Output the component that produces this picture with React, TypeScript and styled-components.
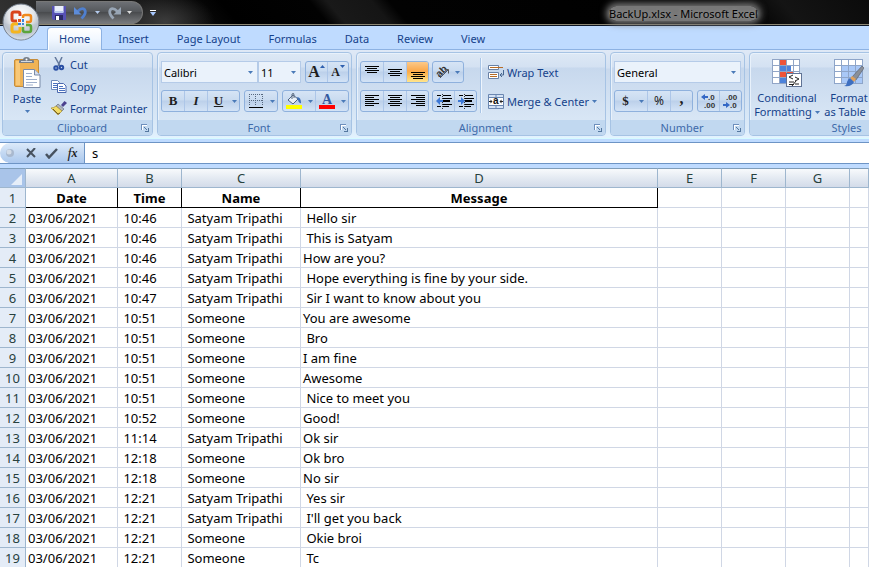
import React from "react";
import styled, { createGlobalStyle, css } from "styled-components";

const GlobalStyle = createGlobalStyle`
  * { box-sizing: border-box; }
  html, body { margin: 0; padding: 0; overflow: hidden; }
  body, button, input, select {
    font-family: "Noto Sans", "Open Sans", sans-serif;
    font-size: 11px;
    color: #15428b;
  }
  button { border: 0; padding: 0; background: none; cursor: pointer; }
  svg { display: block; flex: none; }
`;

const Window = styled.div`
  display: flex;
  flex-direction: column;
  height: 100vh;
  overflow: hidden;
  background: #bfdbff;
`;

/* ---------- title bar ---------- */

const Header = styled.header`
  position: relative;
`;

const TitleBar = styled.div`
  display: flex;
  height: 26px;
  padding-left: 36px;
  border-bottom: 1px solid #0c1524;
  box-shadow: inset 0 -1px 0 #8c8774;
  background:
    radial-gradient(ellipse 50px 30px at 165px 22px, #3c3c3c, transparent),
    linear-gradient(50deg, #333 0, #1b1b1b 16%, #000 27%, #020202 37%, #191919 39%, #151515 44%, #020202 46%, #000 84%, #141414 90%, #0b0b0b 100%);
`;

const QuickAccess = styled.div`
  display: flex;
  align-items: center;
  width: 107px;
  height: 23px;
  margin-top: 1px;
  padding-left: 15px;
  border: 1px solid #777;
  border-left: 0;
  border-radius: 0 12px 12px 0;
  background: linear-gradient(#6d7075, #55585c 45%, #4a4c4f 50%, #77797c);
`;

const QuickButton = styled.button<{ $width: number }>`
  display: flex;
  align-items: center;
  align-self: center;
  justify-content: center;
  width: ${(p) => p.$width}px;
  height: 20px;
`;

const WindowTitle = styled.h1`
  flex: 1;
  margin: 0;
  padding-left: 447px;
  font-size: 11px;
  font-weight: 400;
  line-height: 27px;
  white-space: nowrap;
  color: #000;
  span {
    border-radius: 8px;
    background: #777;
    box-shadow: 0 0 7px 3px #777;
    text-shadow: 0 0 4px #999;
  }
`;

const Orb = styled.button`
  position: absolute;
  left: 2px;
  top: 3px;
`;

/* ---------- ribbon ---------- */

const TabStrip = styled.nav`
  display: flex;
  gap: 4px;
  height: 24px;
  padding: 1px 0 0 47px;
  border-bottom: 1px solid #8db2e3;
  background: #bfdbff;
`;

const Tab = styled.button<{ $active?: boolean }>`
  height: 23px;
  padding: 0 11px;
  line-height: 22px;
  white-space: nowrap;
  border: 1px solid transparent;
  border-bottom: 0;
  border-radius: 4px 4px 0 0;
  ${(p) =>
    p.$active &&
    css`
      border-color: #8db2e3;
      background: linear-gradient(#fff, #f2f8ff 50%, #dce8f6);
      box-shadow: inset 1px 1px 0 #fff;
    `}
`;

const Ribbon = styled.div`
  display: flex;
  gap: 4px;
  padding: 2px 0 2px 2px;
  border-bottom: 1px solid #d6fbff;
  background: linear-gradient(#dfe9f6, #d4e1f2 20%, #c9d9ed 22%, #dcebf9 90%, #e3f3ff);
`;

const GroupBox = styled.section<{ $width?: number }>`
  display: flex;
  flex-direction: column;
  flex: ${(p) => (p.$width ? "none" : "1 0 178px")};
  width: ${(p) => (p.$width ? p.$width + "px" : "auto")};
  border: 1px solid #a6c3e4;
  border-radius: 4px;
  box-shadow: inset 1px 1px 0 #e8f1fb;
  background: linear-gradient(#dde8f5 0, #d4e1f2 14px, #c7d8ed 15px, #d8e6f5 66px);
  overflow: hidden;
`;

const GroupBody = styled.div`
  display: flex;
  height: 67px;
  padding: 8px 3px 0;
`;

const GroupLabel = styled.h2`
  display: flex;
  align-items: center;
  height: 15px;
  margin: 0;
  padding: 0 3px 0 20px;
  font-size: 11px;
  font-weight: 400;
  line-height: 15px;
  color: #3e6aaa;
  background: #c1d8f0;
  > span { flex: 1; text-align: center; }
`;

const Stack = styled.div`
  display: flex;
  flex-direction: column;
  gap: 7px;
`;

const Line = styled.div<{ $gap?: number }>`
  display: flex;
  height: 22px;
  gap: ${(p) => p.$gap ?? 4}px;
`;

const ButtonSet = styled.div`
  display: flex;
  height: 22px;
  border: 1px solid #8fb1dd;
  border-radius: 3px;
  overflow: hidden;
  background: linear-gradient(#d6e4f5, #c9dbf0 45%, #bcd0ea 50%, #d3e3f6);
`;

const Tool = styled.button<{ $width: number; $joined?: boolean; $on?: boolean }>`
  display: flex;
  align-items: center;
  justify-content: center;
  width: ${(p) => p.$width}px;
  height: 20px;
  border-left: ${(p) => (p.$joined ? "0" : "1px solid #adc6e8")};
  background: ${(p) => (p.$on ? "linear-gradient(#fbc98a, #fba84a 45%, #fcb954 60%, #ffe58c)" : "none")};
  &:first-child { border-left: 0; }
`;

const Letter = styled.span<{ $italic?: boolean; $underline?: boolean; $size?: number; $light?: boolean; $raised?: boolean }>`
  font-family: "Liberation Serif", serif;
  font-size: ${(p) => p.$size ?? 13}px;
  font-weight: ${(p) => (p.$light ? 400 : 700)};
  line-height: 16px;
  color: #1e1e1e;
  padding-bottom: ${(p) => (p.$raised ? "4px" : "0")};
  font-style: ${(p) => (p.$italic ? "italic" : "normal")};
  text-decoration: ${(p) => (p.$underline ? "underline" : "none")};
`;

const Percent = styled.span`
  font-size: 12px;
  line-height: 16px;
  color: #1e1e1e;
`;

const Combo = styled.label<{ $width: number }>`
  position: relative;
  display: flex;
  align-items: center;
  width: ${(p) => p.$width}px;
  height: 22px;
  border: 1px solid #b5cbe8;
  background: #eaf2fb;
  select {
    width: 100%;
    height: 20px;
    padding: 0 2px;
    border: 0;
    background: none;
    appearance: none;
    color: #000;
  }
  svg { position: absolute; right: 4px; pointer-events: none; }
`;

const TextButton = styled.button`
  display: flex;
  align-items: center;
  gap: 3px;
  height: 22px;
  white-space: nowrap;
`;

const ClipboardList = styled.div`
  margin: -8px 0 0 3px;
`;

const BigButton = styled.button<{ $width: number }>`
  display: flex;
  flex-direction: column;
  align-items: center;
  width: ${(p) => p.$width}px;
  height: 60px;
  margin-top: -2px;
  line-height: 14px;
  white-space: nowrap;
  > svg:first-child { margin-bottom: 4px; }
`;

const PasteButton = styled(BigButton)`
  margin-top: -4px;
  > svg:last-child { margin-top: 4px; }
`;

const CaretLine = styled.span`
  display: flex;
  align-items: center;
  gap: 3px;
`;

const Divider = styled.div`
  width: 2px;
  height: 55px;
  margin: -3px 6px 0 3px;
  border-left: 1px solid #a9c5e6;
  border-right: 1px solid #eef5fd;
`;

/* ---------- formula bar ---------- */

const FormulaBar = styled.div`
  display: flex;
  height: 22px;
  margin-top: 3px;
  border-top: 1px solid #6d94c5;
  border-bottom: 1px solid #6d94c5;
  background: #fff;
  flex: none;
`;

const FormulaTools = styled.div`
  display: flex;
  align-items: center;
  width: 85px;
  border-right: 1px solid #6d94c5;
  border-radius: 10px 0 0 10px;
  background: linear-gradient(#dceafa, #c3d8f2 50%, #abc8ee);
`;

const FormulaInput = styled.input`
  flex: 1;
  padding: 0 7px;
  border: 0;
  outline: 0;
  font-size: 13px;
  color: #000;
`;

/* ---------- worksheet ---------- */

const Sheet = styled.main`
  flex: 1;
  min-height: 0;
  margin-top: 4px;
  overflow: hidden;
  background: #fff;
`;

const Grid = styled.table`
  width: 100%;
  min-width: 868px;
  table-layout: fixed;
  border-collapse: separate;
  border-spacing: 0;
  font-size: 13px;
  color: #000;
`;

const HeadCell = styled.th`
  height: 20px;
  padding: 0;
  border-top: 1px solid #7f9db9;
  border-right: 1px solid #9eb6ce;
  border-bottom: 1px solid #9eb6ce;
  font-weight: 400;
  line-height: 18px;
  color: #27413e;
  background: linear-gradient(#f8fafc, #e4eaf2 50%, #d3dbe9);
`;

const CornerCell = styled(HeadCell)`
  background: #a9c4e9;
  svg { margin: 2px 3px 0 auto; }
`;

const RowHead = styled.th`
  height: 20px;
  padding: 2px 0 0;
  border-right: 1px solid #9eb6ce;
  border-bottom: 1px solid #9eb6ce;
  font-weight: 400;
  line-height: 17px;
  color: #27413e;
  background: #e4ecf7;
`;

const Cell = styled.td<{ $title?: boolean }>`
  height: 20px;
  padding: 2px 2px 0;
  border-right: 1px solid #d0d7e5;
  border-bottom: 1px solid #d0d7e5;
  line-height: 17px;
  white-space: pre;
  overflow: hidden;
  ${(p) =>
    p.$title &&
    css`
      border-color: #000;
      font-weight: 700;
      text-align: center;
    `}
`;

/* ---------- icons ---------- */

const Caret = ({ color = "#4a7ab8" }: { color?: string }) => (
  <svg width="5" height="3" viewBox="0 0 5 3"><path d="M0 0h5L2.5 3z" fill={color} /></svg>
);

const Launcher = () => (
  <svg width="8" height="8" viewBox="0 0 8 8" shapeRendering="crispEdges">
    <path d="M.5 6V.5H6" fill="none" stroke="#6d8fbd" />
    <path d="M3 3l3 3M7.500 3.500v4h-4" fill="none" stroke="#54779f" />
    <path d="M1 1h5v1H2v4H1z" fill="#fff" />
  </svg>
);

const OrbIcon = () => (
  <svg width="38" height="38" viewBox="0 0 38 38">
    <defs>
      <radialGradient id="orb" cx=".5" cy=".3" r=".7">
        <stop offset="0" stopColor="#fff" /><stop offset=".5" stopColor="#e3e6ea" /><stop offset=".75" stopColor="#b9c0cb" /><stop offset="1" stopColor="#eef4fb" />
      </radialGradient>
    </defs>
    <circle cx="19" cy="19" r="18" fill="url(#orb)" stroke="#707a88" />
    <path d="M2 20a17 17 0 0 0 34 0q-17 5-34 0z" fill="#b9c3d0" opacity=".4" />
    <g fill="none" strokeWidth="3">
      <path d="M18 13V11q0-2-2-2h-4q-2 0-2 2v5q0 2 2 2h3" stroke="#d9431c" />
      <path d="M21 15v-1q0-2 2-2h4q2 0 2 2v3q0 2-2 2h-3" stroke="#f08a1d" strokeWidth="2.500" />
      <path d="M16 21h-4q-2 0-2 2v4q0 2 2 2h4q2 0 2-2v-3" stroke="#f5b51e" />
      <path d="M21 24v3q0 2 2 2h4q2 0 2-2v-3q0-2-2-2h-3" stroke="#5ba53a" strokeWidth="2.500" />
    </g>
    <path d="M16 16h3v3h-3z" fill="#e8571e" />
    <path d="M20 16h2v3h-2zM16 20h3v2h-3zM20 20h2v2h-2z" fill="#3d86d8" />
  </svg>
);

const SaveIcon = () => (
  <svg width="14" height="14" viewBox="0 0 14 14">
    <path d="M0 0h14v14H1.500L0 12.500z" fill="#5751b5" />
    <path d="M2.500 0h9v6h-9z" fill="#e9eefb" /><path d="M2.500 5h9v2h-9z" fill="#b9c7ee" />
    <path d="M3 9h8v5H3z" fill="#2b2a66" /><path d="M4 10h3v4H4z" fill="#fff" />
  </svg>
);

const UndoIcon = () => (
  <svg width="14" height="14" viewBox="0 0 14 14">
    <path d="M3.500 5.500Q8 1 10.500 3.500 13 7 7.500 12.500" fill="none" stroke="#4f7fce" strokeWidth="2.800" />
    <path d="M0 1v7.500h7.500z" fill="#5d8cd8" />
  </svg>
);

const RedoIcon = () => (
  <svg width="14" height="14" viewBox="0 0 14 14">
    <path d="M10.500 5.500Q6 1 3.500 3.500 1 7 6.500 12.500" fill="none" stroke="#98a5b5" strokeWidth="2.800" />
    <path d="M14 1v7.500H6.500z" fill="#98a5b5" />
  </svg>
);

const PasteIcon = () => (
  <svg width="27" height="31" viewBox="0 0 27 31">
    <rect x=".5" y="2.500" width="24" height="27" rx="1.500" fill="#f0b355" stroke="#c58d3b" />
    <path d="M2 28V4h4v24z" fill="#f8c878" />
    <path d="M5 6V4q0-1 1-1h3q0-3 3.500-3T16 3h3q1 0 1 1v2z" fill="#787f88" />
    <path d="M7 4h11v1H7z" fill="#d5dae0" /><circle cx="12.500" cy="2.500" r="1" fill="#fff" />
    <path d="M9.500 12.500h11l5.500 5.500v12.500H9.500z" fill="#fff" stroke="#7b8ba8" />
    <path d="M20.500 12.500V18H26" fill="#d7e0ee" stroke="#7b8ba8" />
    <path d="M12 16.500h6M12 19.500h6M12 22.500h11M12 25.500h11M12 28h7" stroke="#9eafcc" />
  </svg>
);

const CutIcon = () => (
  <svg width="16" height="14" viewBox="0 0 16 14" fill="none">
    <path d="M4 0l5 9M11 0L7 9" stroke="#63789c" strokeWidth="1.500" />
    <circle cx="5" cy="11" r="1.700" stroke="#2b50a4" strokeWidth="2" /><circle cx="10.500" cy="10.500" r="1.700" stroke="#2b50a4" strokeWidth="2" />
  </svg>
);

const CopyIcon = () => (
  <svg width="16" height="13" viewBox="0 0 16 13">
    <path d="M.5.5h6l2 2v7h-8z" fill="#fff" stroke="#6e8abb" /><path d="M2 3.500h4M2 5.500h4M2 7.500h4" stroke="#4b72c0" />
    <path d="M6.500 3.500h6l2.500 2.500v6.500H6.500z" fill="#fff" stroke="#4a68ae" /><path d="M8 6.500h4M8 8.500h6M8 10.500h6" stroke="#4b72c0" />
  </svg>
);

const PainterIcon = () => (
  <svg width="16" height="14" viewBox="0 0 16 14">
    <path d="M10 4l3.500-4L16 2l-4 4z" fill="#4c418e" />
    <path d="M7 3l6 5-2 2-6-5z" fill="#b1b5bd" stroke="#66707f" strokeWidth=".7" />
    <path d="M5 5l6 5-4 4L0 7q3 0 5-2z" fill="#f3dc66" stroke="#a58c32" strokeWidth=".7" />
    <path d="M2 8l5 5 2-1" fill="none" stroke="#735d28" />
  </svg>
);

const BordersIcon = () => (
  <svg width="14" height="14" viewBox="0 0 14 14" shapeRendering="crispEdges" fill="none">
    <path d="M0 .5h14M0 6.500h14M.5 0v12M6.500 0v12M13.500 0v12" stroke="#56687f" strokeDasharray="1 1" />
    <path d="M0 13.500h14" stroke="#000" />
  </svg>
);

const FillIcon = () => (
  <svg width="16" height="16" viewBox="0 0 16 16">
    <path d="M2 7l5-5 5 4-5 5z" fill="#e9f0f8" stroke="#4d6180" /><path d="M6 6V1q2-2 2 1v3" fill="none" stroke="#5b6b80" />
    <path d="M11 4q4 0 4 6-2 1-3-3z" fill="#3c6eb6" /><path d="M0 12h16v4H0z" fill="#ff0" />
  </svg>
);

const FontColorIcon = () => (
  <svg width="16" height="16" viewBox="0 0 16 16">
    <text x="3" y="11" fontFamily="Liberation Serif" fontWeight="700" fontSize="14" fill="#34599f">A</text>
    <path d="M0 12h16v4H0z" fill="#f00" />
  </svg>
);

type LineSpec = [number, number];
const Lines = ({ rows, top }: { rows: LineSpec[]; top: number }) => (
  <svg width="14" height="14" viewBox="0 0 14 14" shapeRendering="crispEdges">
    {rows.map(([x, w], i) => (
      <rect key={i} x={x} y={top + i * 2} width={w} height="1" fill="#000" />
    ))}
  </svg>
);
const shortRows: LineSpec[] = [[0, 14], [2, 10], [0, 14], [2, 10]];
const leftRows: LineSpec[] = [[0, 14], [0, 9], [0, 14], [0, 9], [0, 14], [0, 9]];
const centerRows: LineSpec[] = [[0, 14], [2, 10], [0, 14], [2, 10], [0, 14], [2, 10]];
const rightRows: LineSpec[] = [[0, 14], [5, 9], [0, 14], [5, 9], [0, 14], [5, 9]];

const IndentIcon = ({ increase }: { increase?: boolean }) => (
  <svg width="16" height="15" viewBox="0 0 16 15">
    <path d="M1 1.500h4M7 1.500h8M7 4.500h9M7 10.500h9M1 12.500h4M7 12.500h6" stroke="#000" />
    <path d="M7 7h7" stroke="#000" strokeWidth="2" /><path d="M6.500 0v15" stroke="#333" strokeDasharray="1 1" />
    <path d={increase ? "M0 6h3V3l4 4-4 4V8H0z" : "M7 6H4V3L0 7l4 4V8h3z"} fill="#3d78d6" />
  </svg>
);

const OrientationIcon = () => (
  <svg width="17" height="18" viewBox="0 0 17 18">
    <text x="2" y="12" transform="rotate(-45 7 9)" fontFamily="Liberation Sans" fontWeight="700" fontSize="10" fill="#333">ab</text>
    <path d="M6 15l8-8M10.500 6.500h4v4" fill="none" stroke="#555" />
  </svg>
);

const WrapIcon = () => (
  <svg width="16" height="15" viewBox="0 0 16 15">
    <path d="M.5.5h10v4H.5zM.5 7.500h10v6H.5z" fill="#fff" stroke="#6981a5" />
    <path d="M2 2.500h13M2 9.500h7M2 11.500h7" stroke="#b86c26" />
    <path d="M15.500 5v5h-3M14 8l-2 2 2 2" fill="none" stroke="#45658f" />
  </svg>
);

const MergeIcon = () => (
  <svg width="16" height="15" viewBox="0 0 16 15">
    <path d="M.5.5h15v14H.5zM.5 3.500h15M.5 11.500h15M8 .5v3M8 11.500v3" fill="#d3e2f6" stroke="#6b87b1" />
    <path d="M1 4h14v7H1z" fill="#fff" />
    <path d="M1 7.500h2M13 7.500h2" stroke="#222" /><path d="M2.500 5.500l2 2-2 2zM13.500 5.500l-2 2 2 2z" fill="#222" />
    <text x="5" y="10" fontFamily="Liberation Sans" fontWeight="700" fontSize="10" fill="#111">a</text>
  </svg>
);

const DecimalIcon = ({ decrease }: { decrease?: boolean }) => (
  <svg width="17" height="18" viewBox="0 0 17 18">
    <g fontFamily="Liberation Sans" fontWeight="700" fontSize="8" fill="#333">
      <text x={decrease ? 4 : 8} y="8">{decrease ? ".00" : ".0"}</text>
      <text x={decrease ? 8 : 4} y="16">{decrease ? ".0" : ".00"}</text>
    </g>
    {decrease ? <path d="M1 12h3v-2l4 3-4 3v-2H1z" fill="#3568c5" /> : <path d="M8 4H5V2L1 5l4 3V6h3z" fill="#3568c5" />}
  </svg>
);

const ConditionalIcon = () => (
  <svg width="30" height="28" viewBox="0 0 30 28" shapeRendering="crispEdges">
    <path d="M0 0h28v25H0z" fill="#fff" />
    <path d="M7 0h7v6H7zM7 13h14v6H7z" fill="#ee5439" />
    <path d="M7 6h12v6H7zM7 19h7v6H7z" fill="#4d83db" />
    <path d="M.5 0v25M7.500 0v25M14.500 0v25M21.500 0v25M27.500 0v25M0 .5h28M0 6.500h28M0 12.500h28M0 18.500h28M0 24.500h28" stroke="#91a5c6" />
    <path d="M14.500 14.500h15v13h-15z" fill="#fff" stroke="#607395" />
    <path d="M21 16l-4 2 4 2M17 23h5M17 25.500h5M23 18l4 2-4 2M23 25h4M24 22l-4 5" fill="none" stroke="#222" shapeRendering="auto" />
  </svg>
);

const TableIcon = () => (
  <svg width="30" height="28" viewBox="0 0 30 28">
    <path d="M0 0h28v25H0z" fill="#fff" /><path d="M7 6h21v19H7z" fill="#a9c8f7" />
    <path d="M.5 0v25M7.500 0v25M14.500 0v25M21.500 0v25M28.500 0v25M0 .5h28M0 6.500h28M0 12.500h28M0 18.500h28M0 24.500h28" stroke="#8ea5c9" />
    <path d="M28 7l2 2-8 12-4-3z" fill="#8a8f98" stroke="#555b66" strokeWidth=".6" /><path d="M18 17l4 3-2 3-4-3z" fill="#e0a15c" />
    <path d="M16 19l4 4q-2 5-10 4 3-1 3-4 1-3 3-4z" fill="#3e6fc0" />
  </svg>
);

const CancelIcon = () => (
  <svg width="10" height="10" viewBox="0 0 10 10"><path d="M1 1l8 8M9 0L1 9" stroke="#47525f" strokeWidth="2" /></svg>
);
const EnterIcon = () => (
  <svg width="13" height="11" viewBox="0 0 13 11"><path d="M1 6l3 3.500L12 1" fill="none" stroke="#47525f" strokeWidth="2.500" /></svg>
);

/* ---------- data ---------- */

const tabs = ["Home", "Insert", "Page Layout", "Formulas", "Data", "Review", "View"];
const columns = ["A", "B", "C", "D", "E", "F", "G", ""];
const columnWidths = [26, 92, 64, 119, 357, 64, 64, 64];
const titles = ["Date", "Time", "Name", "Message"];
const T = " Satyam Tripathi";
const S = " Someone";
const messages: [string, string, string][] = [
  [" 10:46", T, " Hello sir"],
  [" 10:46", T, " This is Satyam"],
  [" 10:46", T, "How are you?"],
  [" 10:46", T, " Hope everything is fine by your side."],
  [" 10:47", T, " Sir I want to know about you"],
  [" 10:51", S, "You are awesome"],
  [" 10:51", S, " Bro"],
  [" 10:51", S, "I am fine"],
  [" 10:51", S, "Awesome"],
  [" 10:51", S, " Nice to meet you"],
  [" 10:52", S, "Good!"],
  [" 11:14", T, "Ok sir"],
  [" 12:18", S, "Ok bro"],
  [" 12:18", S, "No sir"],
  [" 12:21", T, " Yes sir"],
  [" 12:21", T, " I'll get you back"],
  [" 12:21", S, " Okie broi"],
  [" 12:21", S, " Tc"],
];

const Group = ({ label, width, launcher = true, children }: { label: string; width?: number; launcher?: boolean; children: React.ReactNode }) => (
  <GroupBox $width={width} aria-label={label}>
    <GroupBody>{children}</GroupBody>
    <GroupLabel><span>{label}</span>{launcher && <Launcher />}</GroupLabel>
  </GroupBox>
);

const Select = ({ label, value, width }: { label: string; value: string; width: number }) => (
  <Combo $width={width}>
    <select aria-label={label} defaultValue={value}><option>{value}</option></select>
    <Caret />
  </Combo>
);

const ClipboardGroup = () => (
  <Group label="Clipboard" width={151}>
    <PasteButton $width={42}><PasteIcon />Paste<Caret /></PasteButton>
    <ClipboardList>
      <TextButton><CutIcon />Cut</TextButton>
      <TextButton><CopyIcon />Copy</TextButton>
      <TextButton><PainterIcon />Format Painter</TextButton>
    </ClipboardList>
  </Group>
);

const FontGroup = () => (
  <Group label="Font" width={195}>
    <Stack>
      <Line>
        <Line $gap={0}>
          <Select label="Font name" value="Calibri" width={97} />
          <Select label="Font size" value="11" width={43} />
        </Line>
        <ButtonSet>
          <Tool $width={21} aria-label="Grow font"><Letter $size={16}>A</Letter><svg width="5" height="14"><path d="M0 3h5L2.500 0z" fill="#2e5fae" /></svg></Tool>
          <Tool $width={21} aria-label="Shrink font"><Letter $size={12}>A</Letter><svg width="5" height="14"><path d="M0 0h5L2.500 3z" fill="#2e5fae" /></svg></Tool>
        </ButtonSet>
      </Line>
      <Line>
        <ButtonSet>
          <Tool $width={22} aria-label="Bold"><Letter>B</Letter></Tool>
          <Tool $width={23} aria-label="Italic"><Letter $italic>I</Letter></Tool>
          <Tool $width={22} aria-label="Underline"><Letter $underline>U</Letter></Tool>
          <Tool $width={10} $joined aria-label="Underline options"><Caret /></Tool>
        </ButtonSet>
        <ButtonSet>
          <Tool $width={22} aria-label="Borders"><BordersIcon /></Tool>
          <Tool $width={10} $joined aria-label="Border options"><Caret /></Tool>
        </ButtonSet>
        <ButtonSet>
          <Tool $width={22} aria-label="Fill color"><FillIcon /></Tool>
          <Tool $width={10} $joined aria-label="Fill options"><Caret /></Tool>
          <Tool $width={23} aria-label="Font color"><FontColorIcon /></Tool>
          <Tool $width={10} $joined aria-label="Font color options"><Caret /></Tool>
        </ButtonSet>
      </Line>
    </Stack>
  </Group>
);

const AlignmentGroup = () => (
  <Group label="Alignment" width={250}>
    <Stack>
      <Line $gap={3}>
        <ButtonSet>
          <Tool $width={22} aria-label="Top align"><Lines rows={shortRows} top={1} /></Tool>
          <Tool $width={23} aria-label="Middle align"><Lines rows={shortRows} top={4} /></Tool>
          <Tool $width={22} $on aria-label="Bottom align"><Lines rows={shortRows} top={7} /></Tool>
        </ButtonSet>
        <ButtonSet>
          <Tool $width={19} aria-label="Orientation"><OrientationIcon /></Tool>
          <Tool $width={11} $joined aria-label="Orientation options"><Caret /></Tool>
        </ButtonSet>
      </Line>
      <Line $gap={3}>
        <ButtonSet>
          <Tool $width={22} aria-label="Align left"><Lines rows={leftRows} top={1} /></Tool>
          <Tool $width={23} aria-label="Center"><Lines rows={centerRows} top={1} /></Tool>
          <Tool $width={22} aria-label="Align right"><Lines rows={rightRows} top={1} /></Tool>
        </ButtonSet>
        <ButtonSet>
          <Tool $width={21} aria-label="Decrease indent"><IndentIcon /></Tool>
          <Tool $width={22} aria-label="Increase indent"><IndentIcon increase /></Tool>
        </ButtonSet>
      </Line>
    </Stack>
    <Divider />
    <Stack>
      <TextButton><WrapIcon />Wrap Text</TextButton>
      <TextButton><MergeIcon />Merge &amp; Center <Caret /></TextButton>
    </Stack>
  </Group>
);

const NumberGroup = () => (
  <Group label="Number" width={135}>
    <Stack>
      <Select label="Number format" value="General" width={127} />
      <Line>
        <ButtonSet>
          <Tool $width={21} aria-label="Accounting format"><Letter>$</Letter></Tool>
          <Tool $width={11} $joined aria-label="Accounting options"><Caret /></Tool>
          <Tool $width={23} aria-label="Percent style"><Percent>%</Percent></Tool>
          <Tool $width={22} aria-label="Comma style"><Letter $size={16} $raised>,</Letter></Tool>
        </ButtonSet>
        <ButtonSet>
          <Tool $width={21} aria-label="Increase decimal"><DecimalIcon /></Tool>
          <Tool $width={22} aria-label="Decrease decimal"><DecimalIcon decrease /></Tool>
        </ButtonSet>
      </Line>
    </Stack>
  </Group>
);

const StylesGroup = () => (
  <Group label="Styles" launcher={false}>
    <BigButton $width={68}><ConditionalIcon />Conditional<CaretLine>Formatting<Caret /></CaretLine></BigButton>
    <BigButton $width={56}><TableIcon /><span>Format</span><CaretLine>as Table<Caret /></CaretLine></BigButton>
  </Group>
);

export default function App() {
  return (
    <Window>
      <GlobalStyle />
      <Header>
        <TitleBar>
          <QuickAccess>
            <QuickButton $width={16} aria-label="Save"><SaveIcon /></QuickButton>
            <QuickButton $width={28} aria-label="Undo"><UndoIcon /></QuickButton>
            <QuickButton $width={5} aria-label="Undo history"><Caret color="#b5cbed" /></QuickButton>
            <QuickButton $width={27} aria-label="Redo"><RedoIcon /></QuickButton>
            <QuickButton $width={5} aria-label="Redo history"><Caret color="#ddd" /></QuickButton>
          </QuickAccess>
          <QuickButton $width={19} aria-label="Customize toolbar">
            <svg width="6" height="6" viewBox="0 0 6 6"><path d="M0 .5h6" stroke="#fff" /><path d="M0 2h6L3 6z" fill="#a8c8ff" /></svg>
          </QuickButton>
          <WindowTitle><span>BackUp.xlsx - Microsoft Excel</span></WindowTitle>
        </TitleBar>
        <TabStrip>
          {tabs.map((t, i) => <Tab key={t} $active={i === 0}>{t}</Tab>)}
        </TabStrip>
        <Orb aria-label="Office menu"><OrbIcon /></Orb>
      </Header>
      <Ribbon>
        <ClipboardGroup />
        <FontGroup />
        <AlignmentGroup />
        <NumberGroup />
        <StylesGroup />
      </Ribbon>
      <FormulaBar>
        <FormulaTools>
          <QuickButton $width={20} aria-label="Resize name box"><svg width="8" height="8"><circle cx="4" cy="4" r="4" fill="#a9b9cf" /><circle cx="3" cy="3" r="2.500" fill="#d3dce8" /></svg></QuickButton>
          <QuickButton $width={21} aria-label="Cancel"><CancelIcon /></QuickButton>
          <QuickButton $width={21} aria-label="Enter"><EnterIcon /></QuickButton>
          <QuickButton $width={21} aria-label="Insert function"><Letter $italic $light $size={15}>f</Letter><Letter $italic $size={12}>x</Letter></QuickButton>
        </FormulaTools>
        <FormulaInput aria-label="Formula" defaultValue="s" />
      </FormulaBar>
      <Sheet>
        <Grid>
          <colgroup>
            {columnWidths.map((w, i) => <col key={i} width={w} />)}
            <col />
          </colgroup>
          <thead>
            <tr>
              <CornerCell aria-label="Select all"><svg width="11" height="11"><path d="M11 0v11H0z" fill="#e6eef9" /></svg></CornerCell>
              {columns.map((c, i) => <HeadCell key={i} scope="col">{c}</HeadCell>)}
            </tr>
          </thead>
          <tbody>
            <tr>
              <RowHead scope="row">1</RowHead>
              {columns.map((_, i) => <Cell key={i} $title={i < titles.length}>{titles[i]}</Cell>)}
            </tr>
            {messages.map((m, r) => (
              <tr key={r}>
                <RowHead scope="row">{r + 2}</RowHead>
                {columns.map((_, i) => <Cell key={i}>{["03/06/2021", ...m][i]}</Cell>)}
              </tr>
            ))}
          </tbody>
        </Grid>
      </Sheet>
    </Window>
  );
}
